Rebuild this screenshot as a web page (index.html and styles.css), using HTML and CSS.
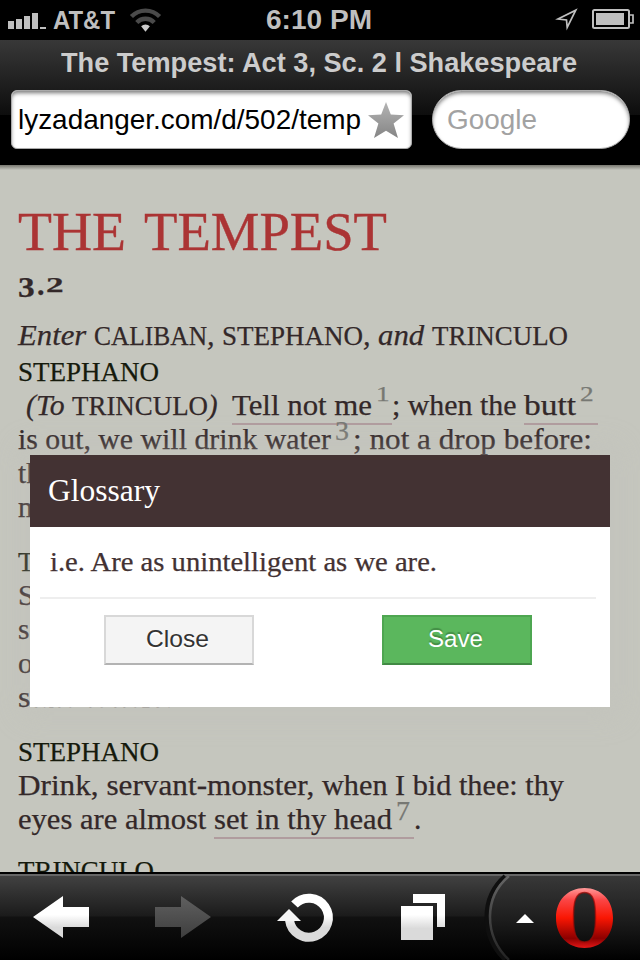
FILE: index.html
```html
<!DOCTYPE html>
<html lang="en">
<head>
<meta charset="utf-8">
<title>The Tempest: Act 3, Sc. 2 | Shakespeare</title>
<link rel="stylesheet" href="styles.css">
</head>
<body>
<div class="phone">
  <header class="status">
    <svg class="signal" width="40" height="18" viewBox="0 0 40 18"><path d="M0 9h6v8H0zM8 7h6v10H8zM16 4h6v13h-6zM24 1h6v16h-6zM32 15h6v2h-6z"/></svg>
    <span class="carrier" data-w="62">AT&amp;T</span>
    <svg class="wifi" width="34" height="26" viewBox="0 0 34 26"><g fill="none" stroke="#4a4a4a" stroke-width="4.5"><path d="M2.500 9.500a20 20 0 0 1 29 0"/><path d="M8 15.500a12.500 12.500 0 0 1 18 0"/></g><path d="M17 25l-4.500-5.500a6.500 6.500 0 0 1 9 0z" fill="#ccc"/></svg>
    <span class="clock" data-w="106">6:10 PM</span>
    <svg class="locate" width="24" height="24" viewBox="0 0 24 24"><path d="M20.800 3.200L12.200 20.500 11.500 13 3 12z" fill="none" stroke="#bfbfbf" stroke-width="1.700"/></svg>
    <svg class="battery" width="42" height="20" viewBox="0 0 42 20"><rect x="1" y="1" width="36" height="18" rx="1.500" fill="none" stroke="#bfbfbf" stroke-width="2"/><path d="M4 4h28v12H4z" fill="#bfbfbf"/><path d="M38 6h3v8h-3" fill="none" stroke="#bfbfbf" stroke-width="1.700"/></svg>
  </header>

  <section class="browser">
    <div class="page-title"><span data-w="516">The Tempest: Act 3, Sc. 2 l Shakespeare</span></div>
    <div class="fields">
      <div class="url"><span data-w="343">lyzadanger.com/d/502/temp</span>
        <svg width="36" height="36" viewBox="0 0 36 36"><defs><linearGradient id="star" x2="0" y2="1"><stop stop-color="#b4b4b4"/><stop offset="1" stop-color="#858585"/></linearGradient></defs><path fill="url(#star)" d="M18 0l4.800 12.500L36 13.200 25.600 21.500 30 36 18 28.800 6 36l4.400-14.500L0 13.200l13.200-.7z"/></svg>
      </div>
      <div class="search"><span data-w="90">Google</span></div>
    </div>
  </section>

  <main class="page">
    <h1><span data-w="108">THE</span> <span data-w="243">TEMPEST</span></h1>
    <h2><span class="old-3">3</span><span class="old-dot">.</span><span class="old-2">2</span></h2>
    <p class="line stage"><span class="it" data-w="76">Enter </span><span class="sc" data-w="113">CALIBAN</span><span class="it" data-w="15">, </span><span class="sc" data-w="141">STEPHANO</span><span class="it" data-w="15">, </span><span class="it" data-w="54">and </span><span class="sc" data-w="136">TRINCULO</span></p>

    <section class="speech">
      <h3 class="line"><span class="sc" data-w="141">STEPHANO</span></h3>
      <p class="line aside"><span class="it" data-w="46">(To </span><span class="sc" data-w="136">TRINCULO</span><span class="it" data-w="24">)  </span><span class="gloss"><span data-w="140">Tell not me</span><sup class="low one">1</sup></span><span data-w="132">; when the </span><span class="gloss"><span data-w="52">butt</span><sup class="low two">2</sup></span></p>
      <p class="line"><span data-w="313">is out, we will drink water</span><sup class="three">3</sup><span data-w="239">; not a drop before:</span></p>
      <p class="line">therefore bear up, and board ’em. Servant-</p>
      <p class="line">monster, drink to me.</p>
    </section>

    <section class="speech">
      <h3 class="line"><span class="sc" data-w="136">TRINCULO</span></h3>
      <p class="line">Servant-monster! the folly of this island!</p>
      <p class="line">say there’s but five upon this isle: we are</p>
      <p class="line">of them; if th’ other two be brained like us,</p>
      <p class="line"><span data-w="155">state totters.</span></p>
    </section>

    <section class="speech last">
      <h3 class="line"><span class="sc" data-w="141">STEPHANO</span></h3>
      <p class="line"><span data-w="304">Drink, servant-monster, </span><span data-w="242">when I bid thee: thy</span></p>
      <p class="line"><span data-w="196">eyes are almost </span><span class="gloss"><span data-w="178">set in thy head</span><sup>7</sup></span><span>.</span></p>
    </section>

    <section class="speech">
      <h3 class="line"><span class="sc" data-w="136">TRINCULO</span></h3>
    </section>
  </main>

  <div class="dialog" role="dialog">
    <div class="dialog-title"><span data-w="112">Glossary</span></div>
    <div class="dialog-text"><span data-w="387">i.e. Are as unintelligent as we are.</span></div>
    <div class="actions">
      <button class="close"><span data-w="63">Close</span></button>
      <button class="save"><span data-w="55">Save</span></button>
    </div>
  </div>

  <nav class="toolbar">
    <svg width="640" height="86" viewBox="0 0 640 86">
      <defs>
        <linearGradient id="white" x2="0" y2="1"><stop offset=".45" stop-color="#fff"/><stop offset=".75" stop-color="#dadada"/></linearGradient>
        <linearGradient id="dim" x2="0" y2="1"><stop stop-color="#606060"/><stop offset="1" stop-color="#3e3e3e"/></linearGradient>
        <linearGradient id="red" x2="0" y2="1"><stop stop-color="#ff9a9a"/><stop offset=".2" stop-color="#fb4545"/><stop offset=".5" stop-color="#f91603"/><stop offset=".84" stop-color="#8c0000"/><stop offset="1" stop-color="#e41717"/></linearGradient>
        <linearGradient id="rim" x2="0" y2="1"><stop stop-color="#666"/><stop offset="1" stop-color="#222"/></linearGradient>
        <linearGradient id="menu" x2="0" y2="1"><stop stop-color="#383838"/><stop offset=".5" stop-color="#1e1e1e"/><stop offset="1" stop-color="#000"/></linearGradient>
      </defs>
      <path d="M509 2Q490 18 490 43T509 86H640V2z" fill="url(#menu)"/>
      <path d="M505 2Q486.500 18 486.500 43T505 86" fill="none" stroke="#0f0f0f" stroke-width="4"/>
      <path d="M509 2Q490 18 490 43T509 86" fill="none" stroke="url(#rim)" stroke-width="2.500"/>
      <path d="M33 43l30-21v11h26v20H63v11z" fill="url(#white)"/>
      <path d="M211 43l-30-21v11h-26v20h26v11z" fill="url(#dim)"/>
      <path d="M294.500 30.500A19.500 19.500 0 1 1 289.500 46" fill="none" stroke="url(#white)" stroke-width="9"/>
      <path d="M277 47l12-12 12 12z" fill="#f5f5f5"/>
      <path d="M413 20h32v33h-8V29h-24zM401 32h32v34h-32z" fill="url(#white)"/>
      <path d="M516 49l9-9 9 9z" fill="#fff"/>
      <path fill="url(#red)" fill-rule="evenodd" d="M584.500 14C601 14 613 26 613 44S601 74 584.500 74 556 62 556 44 568 14 584.500 14zM584.500 18.500C575 18.500 573.500 29 573.500 43s1.500 25 11 25S595.500 57 595.500 43s-1.500-24.500-11-24.500z"/>
      <path fill="none" stroke="#a30a05" stroke-opacity=".7" stroke-width="1.500" d="M584.500 18.500C575 18.500 573.500 29 573.500 43s1.500 25 11 25S595.500 57 595.500 43s-1.500-24.500-11-24.500z"/>
    </svg>
  </nav>
</div>
<script src="typeset.js"></script>
</body>
</html>
```
FILE: styles.css
```css
* { box-sizing: border-box; }
body, h1, h2, h3, p { margin: 0; font-weight: normal; }
body { width: 640px; height: 960px; overflow: hidden; background: #000; }
span { white-space: pre; }
svg { display: block; }

.phone {
  position: relative;
  display: flex;
  flex-direction: column;
  width: 640px;
  height: 960px;
  font-family: "Liberation Sans", Arial, sans-serif;
}

.status {
  display: flex;
  align-items: center;
  height: 40px;
  padding: 0 6px 2px 8px;
  color: #bfbfbf;
  font-weight: bold;
  font-size: 27px;
  line-height: 40px;
}
.signal { fill: #bfbfbf; margin-top: 3px; }
.carrier { margin-left: 5px; padding-top: 2px; font-size: 25px; }
.wifi { margin-left: 14px; width: 33px; margin-top: 2px; }
.clock { margin-left: 104px; padding-top: 2px; }
.locate { margin-left: 183px; }
.battery { margin-left: auto; }

.browser {
  height: 125px;
  background: linear-gradient(#383838, #0d0d0d 75px, #000 75px);
}
.page-title {
  height: 50px;
  padding-left: 61px;
  color: #ccc;
  font-weight: bold;
  font-size: 27px;
  line-height: 46px;
}
.fields { display: flex; justify-content: space-between; padding: 0 10px 0 11px; }
.url, .search {
  display: flex;
  align-items: center;
  height: 59px;
  border: 1px solid #aaa;
  background: #fff;
  box-shadow: inset 0 3px 4px -1px #777;
  font-size: 28px;
}
.url { width: 401px; padding: 0 6px; gap: 7px; border-radius: 6px; color: #000; }
.search { width: 198px; padding: 0 14px; border-radius: 30px; color: #a2a2a2; }

.page {
  height: 707px;
  overflow: hidden;
  padding: 37px 0 0 18px;
  background: linear-gradient(#77776f, #c5c6be 5px);
  color: #332829;
  font-family: "Liberation Serif", Georgia, serif;
  font-size: 29.5px;
  -webkit-text-stroke: .25px currentColor;
}
h1 {
  display: flex;
  gap: 18px;
  height: 66px;
  color: #ab3434;
  font-size: 54.5px;
  line-height: 59px;
  -webkit-text-stroke-width: .4px;
}
h2 { display: flex; height: 50px; font-size: 22px; font-weight: bold; line-height: 33px; }
h2 span { transform-origin: 0 0; }
.old-3 { width: 19px; font-size: 29px; transform: translateY(3px) scaleX(1.15); }
.old-dot { width: 9px; font-size: 30px; transform: translateY(0); }
.old-2 { transform: translateY(0) scaleX(1.6); }
.line { height: 34px; font-size: 29.5px; line-height: 34px; white-space: nowrap; }
.stage { margin-bottom: 2px; }
.speech { margin-bottom: 20px; }
.last { margin-bottom: 17px; }
.aside { padding-left: 8px; }
.it { font-style: italic; }
.sc { font-size: 27px; }
h3 { color: #151a0c; }
.gloss { display: inline-block; height: 37px; border-bottom: 2px solid #b09c9e; vertical-align: top; }
sup {
  display: inline-block;
  width: 22px;
  padding-left: 4px;
  color: #777873;
  font-size: 28px;
  line-height: 0;
  vertical-align: 9px;
}
.low { font-size: 21px; vertical-align: 14px; transform: scaleX(1.3); transform-origin: 4px 0; }
.one { width: 20px; }

.dialog {
  position: absolute;
  left: 30px;
  top: 455px;
  width: 580px;
  height: 252px;
  background: #fff;
  box-shadow: 0 0 26px 8px rgba(192, 193, 187, .4);
  color: #433233;
  font-family: "Liberation Serif", Georgia, serif;
  -webkit-text-stroke: .25px currentColor;
}
.dialog-title {
  height: 72px;
  padding-left: 18px;
  background: #433233;
  color: #fff;
  font-size: 31.5px;
  line-height: 72px;
  -webkit-text-stroke-width: 0;
}
.dialog-text {
  height: 72px;
  margin: 0 14px 0 10px;
  padding-left: 10px;
  border-bottom: 2px solid #eee;
  font-size: 27.5px;
  line-height: 70px;
}
.actions { display: flex; gap: 128px; padding: 16px 0 0 74px; }
button {
  width: 150px;
  height: 50px;
  padding: 0 4px 3px 0;
  border: 2px solid #d8d8d8;
  border-bottom-color: #b3b3b3;
  background: #f4f4f4;
  color: #333;
  font: 24px "Liberation Sans", Arial, sans-serif;
  text-shadow: 0 2px 1px #fff;
  -webkit-text-stroke-width: 0;
}
.save {
  border-color: #4ea651;
  border-bottom-color: #418944;
  background: #5bb75d;
  color: #fff;
  text-shadow: 0 -2px 1px #438b45;
}

.toolbar {
  height: 88px;
  border-top: 2px solid #000;
  background: linear-gradient(#666 2px, #414141 2px, #1b1b1b 42px, #111 43px, #000);
}
```
FILE: typeset.js
```js
// Widens or condenses each phrase so that it fills its measure.
document.querySelectorAll("[data-w]").forEach(function (el) {
  el.style.display = "inline-block";
  el.style.flexShrink = "0";
  var natural = el.getBoundingClientRect().width;
  var measure = Number(el.dataset.w);
  el.style.transformOrigin = "0 0";
  el.style.transform = "scaleX(" + measure / natural + ")";
  el.style.marginRight = measure - natural + "px";
});
```
